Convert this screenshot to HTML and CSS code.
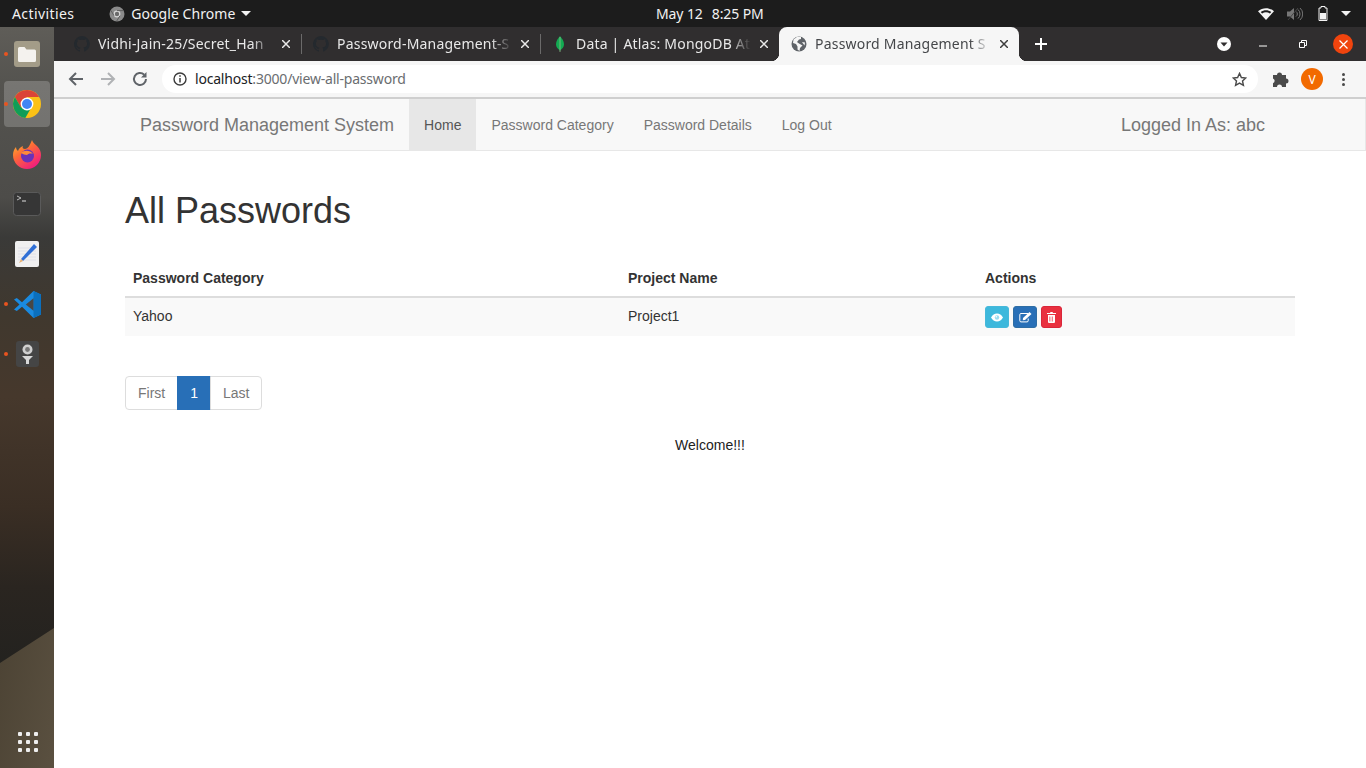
FILE: index.html
```html
<!DOCTYPE html>
<html lang="en">
<head>
<meta charset="utf-8">
<title>Password Management System</title>
<link rel="stylesheet" href="styles.css">
</head>
<body>
<header class="topbar">
  <span class="activities">Activities</span>
  <span class="appmenu">
    <svg class="appicon" width="16" height="16" viewBox="0 0 16 16"><circle cx="8" cy="8" r="7.5" fill="#8a8a8a"/><circle cx="8" cy="8" r="3.4" fill="#d8d8d8"/><circle cx="8" cy="8" r="2.2" fill="#6a6a6a"/><path d="M8 4.6h6.4M5 9.7 1.9 4.4M11 9.7 7.6 15.2" stroke="#5f5f5f" stroke-width="1"/></svg>
    Google Chrome
    <svg width="10" height="5" viewBox="0 0 10 5"><path d="M0 0h10L5 5z" fill="#f2f2f2"/></svg>
  </span>
  <span class="clock"><span>May 12</span><span>8:25 PM</span></span>
  <span class="tray">
    <svg width="16" height="12" viewBox="0 0 16 12"><path d="M0 3.2C4.5-.9 11.500-.9 16 3.200L8 12z" fill="#f4f4f4"/><path d="M2.700 3.900c3.200-2.300 7.400-2.300 10.600 0l-1.400 1.500c-2.400-1.500-5.400-1.500-7.800 0z" fill="#1c1c1c"/></svg>
    <svg width="16" height="14" viewBox="0 0 16 14"><path d="M0 4.500h3L7 1v12L3 9.500H0z" fill="#777"/><path d="M9 4.500a3 3 0 0 1 0 5M11 2.500a6 6 0 0 1 0 9M13 1a8 8 0 0 1 0 12" stroke="#777" fill="none"/><path d="M1 13 11 1" stroke="#444"/></svg>
    <svg class="battery" width="10" height="15" viewBox="0 0 10 15"><path d="M3 .5h4v1.500h2v12.500H1V2h2z" fill="none" stroke="#f4f4f4"/><rect x="2" y="7" width="6" height="6.500" fill="#f4f4f4"/></svg>
    <svg class="traycaret" width="10" height="5" viewBox="0 0 10 5"><path d="M0 0h10L5 5z" fill="#f2f2f2"/></svg>
  </span>
</header>
<div class="desktop">
  <nav class="dock">
    <div class="dockitem"><i class="rundot"></i>
      <svg width="26" height="26" viewBox="0 0 26 26"><rect width="26" height="26" rx="3" fill="#a39c88"/><path d="M4 7.500q0-1.500 1.500-1.500h5l2 2.500h8q1.500 0 1.500 1.500v9.500q0 1.500-1.500 1.500h-15Q4 21 4 19.500z" fill="#f4f2ee"/></svg>
    </div>
    <div class="dockitem active"><i class="rundot"></i>
      <svg width="28" height="28" viewBox="0 0 28 28"><circle cx="14" cy="14" r="14" fill="#fbc116"/><path d="M14 0a14 14 0 0 0-12.100 7l6 10.500L14 7h12.100A14 14 0 0 0 14 0z" fill="#db4437"/><path d="M1.900 7A14 14 0 0 0 12.300 27.900L18 18 8 17.500z" fill="#0f9d58"/><circle cx="14" cy="14" r="6.400" fill="#fff"/><circle cx="14" cy="14" r="5" fill="#4285f4"/></svg>
    </div>
    <div class="dockitem">
      <svg width="28" height="30" viewBox="0 0 28 30"><defs><linearGradient id="fx" x1="0" y1="0" x2="0.700" y2="1"><stop offset="0" stop-color="#ffc62e"/><stop offset=".45" stop-color="#ff6a36"/><stop offset="1" stop-color="#f01a80"/></linearGradient></defs><path d="M19 1c1 3 3 4 5 6 3 3 4 6 4 9a14 14 0 0 1-28 0c0-3 1-6 3-8 0 2 1 3 2 4 1-3 3-4 5-5-1 2 0 3 2 3 3 0 5-4 7-9z" fill="url(#fx)"/><circle cx="14.500" cy="17" r="6.500" fill="#6a32b8"/><path d="M8 14c3-3 9-3 12 1-3-1-5 0-6 1-2 0-4-1-6-2z" fill="#ff8a3a"/></svg>
    </div>
    <div class="dockitem">
      <svg width="28" height="24" viewBox="0 0 28 24"><rect x=".5" y=".5" width="27" height="23" rx="3" fill="#363636" stroke="#5a5a5a"/><path d="m4 4 4 2-4 2" fill="none" stroke="#bbb"/><path d="M9 9h4" stroke="#ddd"/></svg>
    </div>
    <div class="dockitem">
      <svg width="24" height="26" viewBox="0 0 24 26"><rect width="24" height="26" rx="2" fill="#f0f0f0"/><path d="M3 7h18M3 10h18M3 13h18M3 16h18M3 19h18" stroke="#dcdce6" stroke-width=".8"/><path d="m6 18 2 2L22 6l-3-3z" fill="#2f6fd6"/><path d="m4 22 2-4 2 2z" fill="#e8b070"/></svg>
    </div>
    <div class="dockitem"><i class="rundot"></i>
      <svg width="27" height="27" viewBox="0 0 27 27"><path d="M19.500 0 27 3.500v20L19.500 27 8 15.800 2.800 20 0 18.500 5.500 13.500 0 8.500 2.800 7 8 11.200z" fill="#1a8ae0"/><path d="M19.500 0 27 3.500v20L19.500 27z" fill="#0b6fbd"/><path d="M19.500 7.300 11.800 13.500l7.700 6.200z" fill="#484746"/></svg>
    </div>
    <div class="dockitem"><i class="rundot"></i>
      <svg width="23" height="26" viewBox="0 0 23 26"><rect width="23" height="26" rx="3" fill="#454545"/><circle cx="11.500" cy="8.500" r="5" fill="#d0d0d0"/><circle cx="11.500" cy="8.500" r="2.400" fill="#777"/><path d="M6 15h11l-4 4v4h-3v-4z" fill="#d8d8d8"/></svg>
    </div>
    <div class="dockgrid" aria-hidden="true"><i></i><i></i><i></i><i></i><i></i><i></i><i></i><i></i><i></i></div>
  </nav>
  <div class="window">
    <div class="tabstrip">
      <div class="tab">
        <svg class="fav" width="16" height="16" viewBox="0 0 16 16"><path fill="#24292e" d="M8 0a8 8 0 0 0-2.500 15.600c.4.100.5-.2.500-.4v-1.400c-2.200.5-2.700-1-2.700-1-.4-.9-.9-1.200-.9-1.200-.7-.5.100-.5.100-.5.800.100 1.200.8 1.200.8.700 1.200 1.900.9 2.300.7.100-.5.300-.9.500-1.100-1.800-.2-3.600-.9-3.600-4 0-.9.300-1.600.8-2.100-.1-.2-.4-1 .1-2.100 0 0 .7-.2 2.200.8a7.600 7.600 0 0 1 4 0c1.500-1 2.200-.8 2.200-.8.400 1.100.2 1.900.1 2.100.5.600.8 1.300.8 2.100 0 3.100-1.900 3.700-3.700 3.900.3.300.6.800.6 1.500v2.200c0 .2.100.5.600.4A8 8 0 0 0 8 0z"/></svg>
        <span class="tabtitle">Vidhi-Jain-25/Secret_Han</span>
        <svg class="tabx" width="8" height="8" viewBox="0 0 8 8"><path d="m0 0 8 8M8 0 0 8" stroke="#e8e8e8" stroke-width="1.500"/></svg>
      </div>
      <i class="tabsep"></i>
      <div class="tab">
        <svg class="fav" width="16" height="16" viewBox="0 0 16 16"><path fill="#24292e" d="M8 0a8 8 0 0 0-2.500 15.600c.4.100.5-.2.500-.4v-1.400c-2.200.5-2.700-1-2.700-1-.4-.9-.9-1.200-.9-1.200-.7-.5.100-.5.100-.5.800.100 1.200.8 1.200.8.700 1.200 1.900.9 2.300.7.100-.5.300-.9.500-1.100-1.800-.2-3.600-.9-3.600-4 0-.9.300-1.600.8-2.100-.1-.2-.4-1 .1-2.100 0 0 .7-.2 2.200.8a7.600 7.600 0 0 1 4 0c1.500-1 2.200-.8 2.200-.8.400 1.100.2 1.900.1 2.100.5.600.8 1.300.8 2.100 0 3.100-1.900 3.700-3.700 3.900.3.300.6.800.6 1.500v2.200c0 .2.100.5.600.4A8 8 0 0 0 8 0z"/></svg>
        <span class="tabtitle">Password-Management-S</span>
        <svg class="tabx" width="8" height="8" viewBox="0 0 8 8"><path d="m0 0 8 8M8 0 0 8" stroke="#e8e8e8" stroke-width="1.500"/></svg>
      </div>
      <i class="tabsep"></i>
      <div class="tab">
        <svg class="fav" width="16" height="16" viewBox="0 0 16 16"><path fill="#13aa52" d="M8 0c2 2.500 4 5 4 8.200 0 2.800-1.800 4.800-3.500 5.800L8 16l-.5-2C5.800 13 4 11 4 8.200 4 5 6 2.500 8 0z"/><path d="M8 1v15" stroke="#b8c4a0" stroke-width=".6"/></svg>
        <span class="tabtitle">Data | Atlas: MongoDB At</span>
        <svg class="tabx" width="8" height="8" viewBox="0 0 8 8"><path d="m0 0 8 8M8 0 0 8" stroke="#e8e8e8" stroke-width="1.500"/></svg>
      </div>
      <div class="tab current">
        <svg class="fav" width="16" height="16" viewBox="0 0 16 16"><circle cx="8" cy="8" r="7.500" fill="#5f6368"/><path d="M6 .8C5 2 3.500 2.500 2.500 3.500L2 7l3 1 1.500 2.500v3l2 1.500.5-3 2.500-2.500L8 7.500 6 6l2-2.500 2-.5V1z" fill="#f6f6f6"/><path d="m11 6 3 .5-.5 3z" fill="#f6f6f6"/></svg>
        <span class="tabtitle">Password Management S</span>
        <svg class="tabx" width="8" height="8" viewBox="0 0 8 8"><path d="m0 0 8 8M8 0 0 8" stroke="#3c3c3c" stroke-width="1.500"/></svg>
      </div>
      <svg class="newtab" width="12" height="12" viewBox="0 0 12 12"><path d="M6 0v12M0 6h12" stroke="#fff" stroke-width="2"/></svg>
      <div class="winctrls">
        <svg width="14" height="14" viewBox="0 0 14 14"><circle cx="7" cy="7" r="7" fill="#fff"/><path d="M3.500 5.500h7L7 9.500z" fill="#302e2f"/></svg>
        <svg width="8" height="2" viewBox="0 0 8 2" class="wmin"><path d="M0 1h8" stroke="#fff"/></svg>
        <svg width="8" height="8" viewBox="0 0 8 8" class="wmax"><path d="M.5 2.500h5v5h-5zM2.500 2.500v-2h5v5h-2" fill="none" stroke="#fff"/></svg>
        <span class="wclose"><svg width="9" height="9" viewBox="0 0 9 9"><path d="m.5.500 8 8M8.500.500l-8 8" stroke="#fff" stroke-width="1.200"/></svg></span>
      </div>
    </div>
    <div class="toolbar">
      <svg width="16" height="16" viewBox="0 0 16 16" class="tb back"><path d="M15 8H2M8 2 2 8l6 6" fill="none" stroke="#5f6368" stroke-width="2"/></svg>
      <svg width="16" height="16" viewBox="0 0 16 16" class="tb fwd"><path d="M1 8h13M8 2l6 6-6 6" fill="none" stroke="#b0b2b5" stroke-width="2"/></svg>
      <svg width="16" height="16" viewBox="0 0 16 16" class="tb reload"><path d="M14 8a6 6 0 1 1-1.800-4.300" fill="none" stroke="#5f6368" stroke-width="2"/><path d="M14.500 1v5.500H9z" fill="#5f6368"/></svg>
      <div class="omnibox">
        <svg width="14" height="14" viewBox="0 0 14 14"><circle cx="7" cy="7" r="6" fill="none" stroke="#3c3c3c" stroke-width="1.400"/><path d="M7 6v4.500M7 3.300v1.500" stroke="#3c3c3c" stroke-width="1.500"/></svg>
        <span class="url"><b>localhost</b>:3000/view-all-password</span>
        <svg class="star" width="15" height="15" viewBox="0 0 16 16"><path d="m8 1.500 2 4.400 4.700.5-3.500 3.200 1 4.700L8 11.900l-4.200 2.400 1-4.700L1.300 6.400 6 5.900z" fill="none" stroke="#4a4a4a" stroke-width="1.500"/></svg>
      </div>
      <svg class="ext" width="16" height="16" viewBox="0 0 16 16"><path d="M0 4h4a2.500 2.500 0 0 1 5 0h4v3.500a2.500 2.500 0 0 1 0 5V16H9a2.500 2.500 0 0 0-5 0H0v-3.800a2.500 2.500 0 0 0 0-4.700z" fill="#4a4a4a"/></svg>
      <span class="avatar">V</span>
      <span class="kebab"><i></i><i></i><i></i></span>
    </div>
    <div class="page">
      <div class="navbar">
        <div class="navinner">
          <a class="brand">Password Management System</a>
          <a class="navlink on">Home</a>
          <a class="navlink">Password Category</a>
          <a class="navlink">Password Details</a>
          <a class="navlink">Log Out</a>
          <span class="who">Logged In As: abc</span>
        </div>
      </div>
      <main class="content">
        <h1>All Passwords</h1>
        <table class="grid">
          <thead><tr><th class="c1">Password Category</th><th class="c2">Project Name</th><th>Actions</th></tr></thead>
          <tbody><tr><td>Yahoo</td><td>Project1</td><td class="acts">
            <span class="btn info"><svg width="12" height="9" viewBox="0 0 12 9"><path d="M0 4.500C1.500 1.800 3.500.5 6 .5s4.500 1.300 6 4c-1.500 2.700-3.500 4-6 4s-4.500-1.300-6-4z" fill="#fff"/><circle cx="6" cy="4.500" r="2.200" fill="#9adcf0"/><circle cx="5.300" cy="3.800" r=".8" fill="#fff"/></svg></span>
            <span class="btn prim"><svg width="13" height="11" viewBox="0 0 13 11"><path d="M9 1.500H2q-1.200 0-1.200 1.200v6q0 1.200 1.200 1.200h6q1.200 0 1.200-1.200V6.500" fill="none" stroke="#fff" stroke-width="1"/><path d="m4 6 6.500-6L12.500 2 6 8l-2.200.3z" fill="#fff"/></svg></span>
            <span class="btn dang"><svg width="9" height="11" viewBox="0 0 9 11"><path d="M3 1 3.500 0h2L6 1h3v1H0V1z" fill="#fff"/><path fill-rule="evenodd" d="M1 3h7v7q0 1-1 1H2q-1 0-1-1zm1.500 1.500v5h.8v-5zm2.300 0v5h.8v-5z" fill="#fff"/></svg></span>
          </td></tr></tbody>
        </table>
        <ul class="pager"><li>First</li><li class="on">1</li><li>Last</li></ul>
        <p class="welcome">Welcome!!!</p>
      </main>
    </div>
  </div>
</div>
</body>
</html>
```
FILE: styles.css
```css
* { box-sizing: border-box; }
html, body { margin: 0; height: 100%; overflow: hidden; }
body { display: flex; flex-direction: column; width: 1366px; height: 768px; font-family: "Liberation Sans", Arial, sans-serif; background: #fff; }
i { display: block; }

.topbar { height: 27px; flex: none; background: #1c1c1c; color: #f2f2f2; font-family: "Noto Sans", sans-serif; font-size: 14px; display: flex; align-items: center; position: relative; }
.activities { margin-left: 12px; letter-spacing: .4px; }
.appmenu { display: flex; align-items: center; gap: 6px; margin-left: 35px; letter-spacing: .05px; }
.clock { position: absolute; left: 656px; display: flex; gap: 9px; letter-spacing: -.1px; }
.tray { margin-left: auto; display: flex; align-items: center; gap: 13px; margin-right: 15px; }
.battery { margin-left: 2px; }
.traycaret { margin-left: 0; }

.desktop { flex: 1; display: flex; min-height: 0; }
.dock { width: 54px; flex: none; position: relative; display: flex; flex-direction: column; align-items: center; gap: 4px; padding: 4px 4px 0; background: linear-gradient(180deg, #5f5d58 0, #54534f 60px, #4d4c49 170px, #3a3a38 210px, #40382e 290px, #46382c 370px, #3a2e24 480px, #2a2520 560px, #23221f 640px); overflow: hidden; }
.dock::after { content: ""; position: absolute; left: 0; right: 0; bottom: 0; height: 140px; background: linear-gradient(100deg, #4c4334, #5a5040); clip-path: polygon(0 25%, 100% 0, 100% 100%, 0 100%); }
.dockitem { width: 46px; height: 46px; flex: none; display: flex; align-items: center; justify-content: center; position: relative; border-radius: 4px; z-index: 1; }
.dockitem.active { background: rgba(255, 255, 255, .2); }
.rundot { position: absolute; left: 0; top: 21px; width: 4px; height: 4px; border-radius: 50%; background: #e9541f; }
.dockgrid { position: absolute; z-index: 1; left: 18px; bottom: 16px; display: grid; grid-template-columns: repeat(3, 4px); gap: 4px; }
.dockgrid i { width: 4px; height: 4px; background: #eee; border-radius: 1px; }

.window { flex: 1; min-width: 0; display: flex; flex-direction: column; }
.tabstrip { height: 34px; flex: none; background: #302e2f; display: flex; align-items: center; padding-left: 8px; font-family: "Noto Sans", sans-serif; font-size: 14px; color: #e8e8e8; }
.tab { width: 239px; height: 34px; flex: none; display: flex; align-items: center; padding: 0 11px 0 12px; }
.tabsep { width: 1px; height: 20px; background: #6b6a6a; margin: 0 -1px 0 0; flex: none; position: relative; }
.fav { flex: none; margin-right: 8px; }
.tabtitle { flex: 1; min-width: 0; overflow: hidden; white-space: nowrap; letter-spacing: .2px; padding-bottom: 2px; -webkit-mask-image: linear-gradient(90deg, #000 88%, transparent 100%); mask-image: linear-gradient(90deg, #000 88%, transparent 100%); }
.tabx { flex: none; margin-left: 9px; }
.tab.current { background: #f6f6f6; color: #45474a; border-radius: 8px 8px 0 0; width: 240px; position: relative; }
.tab.current::before, .tab.current::after { content: ""; position: absolute; bottom: 0; width: 8px; height: 8px; }
.tab.current::before { left: -8px; background: radial-gradient(circle at 0 0, transparent 8px, #f6f6f6 8.500px); }
.tab.current::after { right: -8px; background: radial-gradient(circle at 100% 0, transparent 8px, #f6f6f6 8.500px); }
.newtab { flex: none; margin-left: 16px; }
.winctrls { margin-left: auto; display: flex; align-items: center; margin-right: 13px; }
.wmin { margin-left: 28px; margin-top: 3px; }
.wmax { margin-left: 32px; }
.wclose { margin-left: 26px; width: 20px; height: 20px; border-radius: 50%; background: #f0440e; display: flex; align-items: center; justify-content: center; }

.toolbar { height: 36px; flex: none; background: #f6f6f6; display: flex; align-items: center; border-bottom: 0; padding-left: 14px; }
.tb { flex: none; }
.fwd { margin-left: 16px; }
.reload { margin-left: 16px; }
.omnibox { margin-left: 14px; width: 1096px; height: 28px; border-radius: 14px; background: #fff; display: flex; align-items: center; padding: 0 11px; font-family: "Noto Sans", sans-serif; font-size: 14px; color: #6a6d70; }
.url { margin-left: 8px; letter-spacing: -.2px; padding-bottom: 2px; }
.url b { font-weight: 400; color: #202124; }
.star { margin-left: auto; }
.ext { margin-left: 15px; flex: none; }
.avatar { margin-left: 12px; width: 22px; height: 22px; border-radius: 50%; background: #f26a00; color: #fff; font-family: "Noto Sans", sans-serif; font-size: 12px; display: flex; align-items: center; justify-content: center; flex: none; }
.kebab { margin-left: 19px; display: flex; flex-direction: column; gap: 2px; flex: none; }
.kebab i { width: 3px; height: 3px; border-radius: 50%; background: #4a4a4a; }

.page { flex: 1; min-height: 0; background: #fff; border-top: 2px solid #cfcfcf; }
.navbar { height: 52px; background: #f8f8f8; border-bottom: 1px solid #e7e7e7; border-right: 1px solid #e7e7e7; }
.navinner { width: 1170px; margin-left: 71px; height: 51px; display: flex; align-items: stretch; color: #777; font-size: 14px; }
.brand { padding: 1px 15px 0; font-size: 18px; line-height: 51px; }
.navlink { padding: 1px 15px 0; line-height: 51px; }
.navlink.on { background: #e7e7e7; color: #555; }
.who { margin-left: auto; margin-right: 30px; padding-top: 1px; font-size: 18px; line-height: 51px; }

.content { width: 1170px; margin: 0 auto; color: #333; font-size: 14px; }
h1 { margin: 0; padding-top: 40px; height: 109px; font-size: 36px; font-weight: 500; line-height: 40px; color: #333; }
.grid { width: 1170px; border-collapse: collapse; table-layout: fixed; }
.grid th { text-align: left; padding: 8px; height: 36px; line-height: 20px; font-weight: 700; border-bottom: 2px solid #ddd; }
.c1 { width: 495px; }
.c2 { width: 357px; }
.grid td { padding: 7px 8px 9px; height: 38px; line-height: 20px; background: #f9f9f9; }
.acts { font-size: 0; }
.btn { display: inline-flex; align-items: center; justify-content: center; height: 22px; border-radius: 3px; margin-right: 4px; vertical-align: middle; position: relative; top: 1px; border: 1px solid; }
.info { width: 24px; background: #3db8dc; border-color: #46b8da; }
.prim { width: 24px; background: #286fb7; border-color: #2e6da4; }
.dang { width: 21px; background: #e9303f; border-color: #d9263a; }
.pager { list-style: none; margin: 40px 0 0; padding: 0; display: inline-flex; font-size: 14px; line-height: 20px; color: #777; vertical-align: top; }
.pager li { padding: 6px 12px; border: 1px solid #ddd; background: #fff; margin-left: -1px; height: 34px; }
.pager li:first-child { margin-left: 0; border-radius: 4px 0 0 4px; }
.pager li:last-child { border-radius: 0 4px 4px 0; }
.pager li.on { background: #286fb7; border-color: #286fb7; color: #fff; }
.welcome { margin: 25px 0 0; line-height: 20px; text-align: center; color: #222; }
```
